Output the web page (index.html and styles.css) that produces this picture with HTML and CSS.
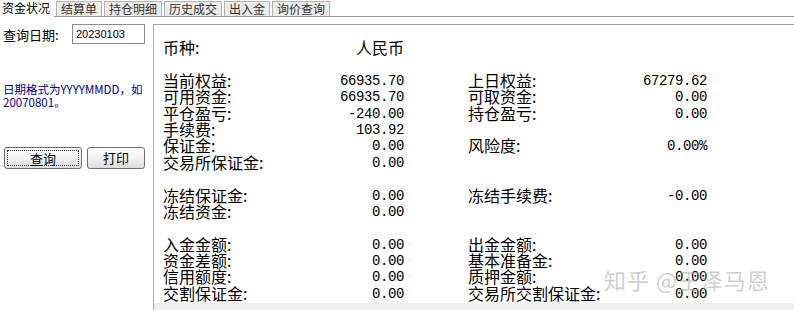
FILE: index.html
```html
<!DOCTYPE html>
<html lang="zh-CN">
<head>
    <meta charset="UTF-8">
    <title>资金状况</title>
    <link rel="stylesheet" href="styles.css">
</head>
<body>
    <div class="tabs">
        <div class="tab active">资金状况</div>
        <div class="tab">结算单</div>
        <div class="tab">持仓明细</div>
        <div class="tab">历史成交</div>
        <div class="tab">出入金</div>
        <div class="tab">询价查询</div>
    </div>

    <div class="main">
        <div class="side">
            <div class="query-row">
                <label for="qdate">查询日期:</label>
                <input type="text" id="qdate" value="20230103">
            </div>
            <p class="hint">日期格式为YYYYMMDD，如<br>20070801。</p>
            <div class="buttons">
                <button class="btn btn-query"><span>查询</span></button>
                <button class="btn btn-print">打印</button>
            </div>
        </div>

        <div class="report">
            <div class="sheet">
                <div class="l1">币种:</div><div class="v1 cny">人民币</div>
                <div class="blank"></div>

                <div class="l1">当前权益:</div><div class="v1">66935.70</div>
                <div class="l2">上日权益:</div><div class="v2">67279.62</div>
                <div class="l1">可用资金:</div><div class="v1">66935.70</div>
                <div class="l2">可取资金:</div><div class="v2">0.00</div>
                <div class="l1">平仓盈亏:</div><div class="v1">-240.00</div>
                <div class="l2">持仓盈亏:</div><div class="v2">0.00</div>
                <div class="l1">手续费:</div><div class="v1">103.92</div>
                <div class="l1">保证金:</div><div class="v1">0.00</div>
                <div class="l2">风险度:</div><div class="v2">0.00%</div>
                <div class="l1">交易所保证金:</div><div class="v1">0.00</div>
                <div class="blank short"></div>

                <div class="l1">冻结保证金:</div><div class="v1">0.00</div>
                <div class="l2">冻结手续费:</div><div class="v2">-0.00</div>
                <div class="l1">冻结资金:</div><div class="v1">0.00</div>
                <div class="blank short"></div>

                <div class="l1">入金金额:</div><div class="v1">0.00</div>
                <div class="l2">出金金额:</div><div class="v2">0.00</div>
                <div class="l1">资金差额:</div><div class="v1">0.00</div>
                <div class="l2">基本准备金:</div><div class="v2">0.00</div>
                <div class="l1">信用额度:</div><div class="v1">0.00</div>
                <div class="l2">质押金额:</div><div class="v2">0.00</div>
                <div class="l1">交割保证金:</div><div class="v1">0.00</div>
                <div class="l2">交易所交割保证金:</div><div class="v2">0.00</div>
            </div>
            <div class="hscroll"></div>
            <div class="watermark">知乎 @王泽马恩</div>
        </div>
    </div>
</body>
</html>
```

FILE: styles.css
```css
body {
    margin: 0;
    width: 794px;
    height: 310px;
    overflow: hidden;
    background: white;
    font-family: "Noto Sans CJK SC", "Liberation Sans", sans-serif;
    color: #000;
}

.tabs {
    display: flex;
    align-items: flex-end;
    height: 16px;
    border-bottom: 1px solid #9a9a9a;
}

.tab {
    font-size: 12px;
    line-height: 14px;
    padding: 0 4px;
    margin-right: 2px;
    border: 1px solid #b4b4b4;
    border-bottom: none;
    background: #ececec;
    color: #333;
}

.tab.active {
    border: none;
    background: white;
    padding: 1px 4px 0 2px;
    margin-bottom: -1px;
    height: 16px;
    color: #000;
}

.main {
    display: flex;
    height: 293px;
}

.side {
    width: 153px;
    flex-shrink: 0;
    padding-top: 7px;
}

.query-row {
    display: flex;
    align-items: center;
    height: 20px;
}

.query-row label {
    font-size: 13px;
    width: 72px;
    padding-left: 3px;
    box-sizing: border-box;
}

.query-row input {
    width: 73px;
    height: 20px;
    box-sizing: border-box;
    border: 1px solid #8c8c8c;
    padding: 0 3px;
    font-family: "Liberation Sans", sans-serif;
    font-size: 11px;
    outline: none;
}

.hint {
    margin: 39px 0 0 3px;
    font-size: 11.5px;
    line-height: 13px;
    color: #000080;
}

.buttons {
    display: flex;
    gap: 5px;
    margin: 38px 0 0 4px;
}

.btn {
    height: 22px;
    font-family: "Noto Sans CJK SC", sans-serif;
    font-size: 13px;
    line-height: 14px;
    border: 1px solid #6f6f6f;
    border-radius: 3px;
    background: linear-gradient(#ffffff, #f2f2f2 50%, #dcdcdc);
    padding: 0;
    color: #000;
}

.btn-query {
    width: 78px;
    padding: 2px;
}

.btn-query span {
    display: block;
    height: 100%;
    border: 1px dotted #333;
    box-sizing: border-box;
    line-height: 14px;
    padding-top: 1px;
}

.btn-print {
    width: 58px;
}

.report {
    position: relative;
    flex: 1;
    margin-top: 7px;
    border-top: 1px solid #9aa0a6;
    border-left: 1px solid #a9aeb3;
    display: flex;
    flex-direction: column;
}

.sheet {
    flex: 1;
    display: grid;
    grid-template-columns: 150px 90px 65px 150px 88px;
    grid-auto-rows: 16.4px;
    line-height: 16.4px;
    padding: 14px 0 0 9px;
    font-size: 16px;
    white-space: nowrap;
}

.l1 {
    grid-column: 1;
}

.v1 {
    grid-column: 2;
    text-align: right;
}

.l2 {
    grid-column: 4;
}

.v2 {
    grid-column: 5;
    text-align: right;
}

.v1, .v2 {
    font-family: "Liberation Mono", monospace;
    font-size: 14px;
    letter-spacing: -0.4px;
    margin-right: -1px;
    padding-top: 2px;
    line-height: 14.4px;
}

.v1.cny {
    font-family: "Noto Sans CJK SC", sans-serif;
    font-size: 16px;
    letter-spacing: 0;
    padding-top: 0;
    line-height: 16.4px;
}

.blank {
    grid-column: 1 / -1;
    height: 16.6px;
}

.blank.short {
    height: 14.6px;
}

.hscroll {
    height: 7px;
    background: #efefef;
}

.watermark {
    position: absolute;
    left: 450px;
    top: 238px;
    font-size: 22px;
    letter-spacing: 1px;
    color: rgba(165, 165, 165, 0.55);
    white-space: nowrap;
}
```
